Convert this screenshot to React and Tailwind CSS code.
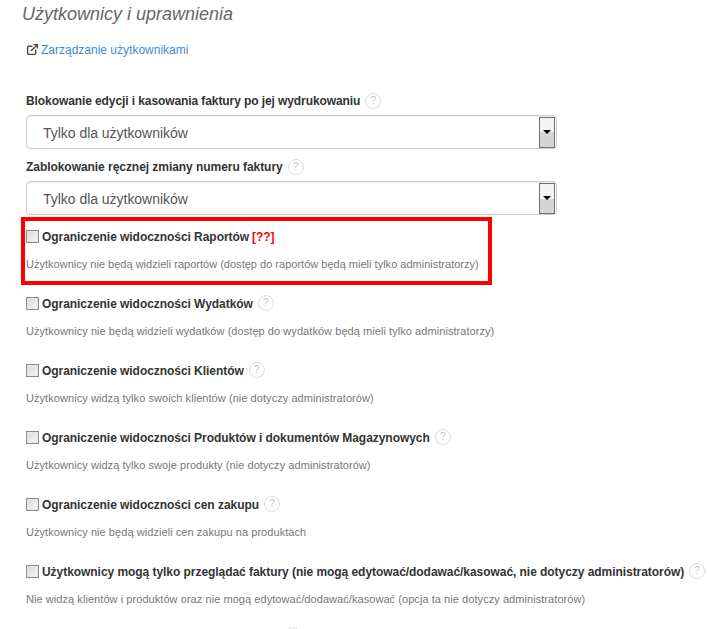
import { ExternalLink } from "lucide-react";

const rows = [
  {
    title: "Ograniczenie widoczności Wydatków",
    desc: "Użytkownicy nie będą widzieli wydatków (dostęp do wydatków będą mieli tylko administratorzy)",
  },
  {
    title: "Ograniczenie widoczności Klientów",
    desc: "Użytkownicy widzą tylko swoich klientów (nie dotyczy administratorów)",
  },
  {
    title: "Ograniczenie widoczności Produktów i dokumentów Magazynowych",
    desc: "Użytkownicy widzą tylko swoje produkty (nie dotyczy administratorów)",
  },
  {
    title: "Ograniczenie widoczności cen zakupu",
    desc: "Użytkownicy nie będą widzieli cen zakupu na produktach",
  },
  {
    title: "Użytkownicy mogą tylko przeglądać faktury (nie mogą edytować/dodawać/kasować, nie dotyczy administratorów)",
    desc: "Nie widzą klientów i produktów oraz nie mogą edytować/dodawać/kasować (opcja ta nie dotyczy administratorów)",
  },
];

function Help() {
  return (
    <span className="ml-[5px] inline-flex h-[16px] w-[16px] shrink-0 items-center justify-center rounded-full border border-[#dddddd] text-[10px] font-normal leading-none tracking-normal text-[#c4c4c4]">
      ?
    </span>
  );
}

function Checkbox() {
  return (
    <span className="mr-[3px] h-[13px] w-[13px] shrink-0 border border-[#8a8a8a] bg-gradient-to-br from-[#d8d8d8] to-[#f6f6f6] shadow-[inset_0_0_0_1px_#e8e8e8]" />
  );
}

function Select() {
  return (
    <div className="flex h-[34px] w-[531px] items-center justify-between rounded-[4px] border border-[#cccccc] pr-px shadow-[inset_0_1px_1px_rgba(0,0,0,0.075)]">
      <span className="pl-[16px] pt-[2px] text-[14px] tracking-[-0.03px] text-[#555555]">Tylko dla użytkowników</span>
      <span className="relative flex h-[31px] w-[16px] items-center justify-center border border-[#707070] bg-gradient-to-b from-[#f4f4f4] from-50% to-[#d4d4d4] to-50%">
        <span className="h-0 w-0 border-x-[4px] border-t-[4px] border-x-transparent border-t-black" />
      </span>
    </div>
  );
}

function Row({ title, desc }) {
  return (
    <div className="h-[67px]">
      <div className="flex h-[14px] items-center text-[12px] font-bold tracking-[-0.05px] text-[#333333]">
        <Checkbox />
        <span className="whitespace-nowrap pt-[2px]">{title}</span>
        <Help />
      </div>
      <p className="mt-[14px] whitespace-nowrap text-[11px] leading-[14px] tracking-[0.06px] text-[#777777]">{desc}</p>
    </div>
  );
}

export default function App() {
  return (
    <div className="h-[629px] overflow-hidden bg-white pl-[26px] pt-[3px] font-['Liberation_Sans',Arial,sans-serif]">
      <h3 className="-ml-[4px] text-[18px] italic leading-[22px] text-[#666666]">Użytkownicy i uprawnienia</h3>

      <a className="mt-[16px] flex h-[17px] items-center text-[12px] text-[#428bca]">
        <ExternalLink size={13} strokeWidth={2.5} className="mr-[2px] text-[#444444]" />
        Zarządzanie użytkownikami
      </a>

      <div className="mt-[35px] flex h-[16px] items-center text-[12px] font-bold tracking-[-0.09px] text-[#333333]">
        Blokowanie edycji i kasowania faktury po jej wydrukowaniu
        <Help />
      </div>
      <div className="mt-[6px]">
        <Select />
      </div>
      <div className="mt-[10px] flex h-[16px] items-center text-[12px] font-bold tracking-[-0.05px] text-[#333333]">
        Zablokowanie ręcznej zmiany numeru faktury
        <Help />
      </div>
      <div className="mt-[6px]">
        <Select />
      </div>

      <div className="-ml-[5px] mt-[2px] h-[68px] w-[471px] border-[4px] border-[#ff0000] pl-[1px] pt-[8px]">
        <div className="flex h-[14px] items-center text-[12px] font-bold tracking-[-0.05px] text-[#333333]">
          <Checkbox />
          <span className="pt-[2px]">Ograniczenie widoczności Raportów</span>
          <span className="ml-[3px] pt-[2px] text-[#ff0000]">[??]</span>
        </div>
        <p className="mt-[14px] whitespace-nowrap text-[11px] leading-[14px] tracking-[0.01px] text-[#777777]">
          Użytkownicy nie będą widzieli raportów (dostęp do raportów będą mieli tylko administratorzy)
        </p>
      </div>

      <div className="mt-[11px]">
        {rows.map((r) => (
          <Row key={r.title} title={r.title} desc={r.desc} />
        ))}
      </div>
      {/* top edge of the next row's help icon, cut by the window */}
      <div className="-mt-[4px] ml-[259px] h-[16px] w-[16px] rounded-full border border-[#dddddd]" />
    </div>
  );
}
